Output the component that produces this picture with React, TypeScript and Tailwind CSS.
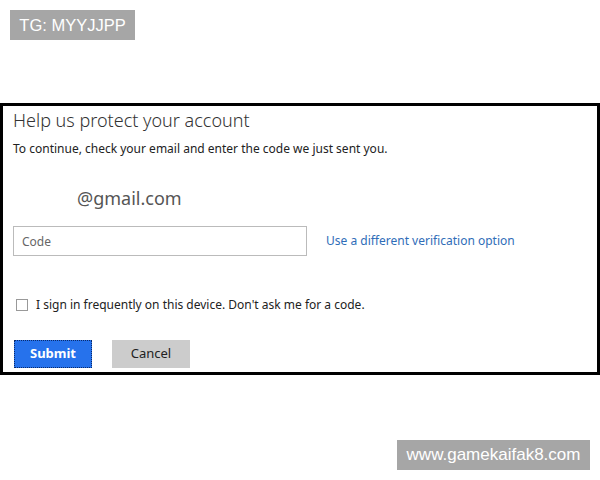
import React from 'react';

export default function App() {
  return (
    <div className="relative w-[600px] h-[480px] bg-white overflow-hidden" style={{ fontFamily: '"Noto Sans", "Open Sans", sans-serif' }}>
      <div className="absolute left-[10px] top-[10px] w-[125px] h-[30px] bg-[#a6a6a6] text-white text-[16.5px] flex items-center justify-center" style={{ fontFamily: '"Liberation Sans", Arial, sans-serif' }}>
        TG: MYYJJPP
      </div>

      <div className="pt-[103px]">
        <div className="h-[272px] border-[3px] border-black px-[10px] pt-[1px] flex flex-col">
          <h1 className="text-[18px] font-light text-[#333] leading-[26px]">Help us protect your account</h1>
          <p className="text-[12px] text-[#222] mt-[7px] leading-[18px]">To continue, check your email and enter the code we just sent you.</p>
          <div className="text-[18px] text-[#555] pl-[64px] mt-[28px] leading-[24px]">@gmail.com</div>
          <div className="flex items-center mt-[16px]">
            <input
              type="text"
              placeholder="Code"
              className="w-[294px] h-[30px] border border-[#bbb] px-[8px] text-[12px] text-[#333] placeholder:text-[#666] outline-none"
            />
            <a className="ml-[19px] text-[12px] text-[#2f6db8]">Use a different verification option</a>
          </div>
          <label className="flex items-center mt-[40px] ml-[3px] gap-[8px]">
            <span className="w-[12px] h-[12px] border border-[#999] bg-white" />
            <span className="text-[12px] text-[#222]">I sign in frequently on this device. Don't ask me for a code.</span>
          </label>
          <div className="flex items-center mt-[26px] ml-[1px] gap-[20px]">
            <button className="w-[78px] h-[28px] bg-[#2672ec] text-white font-bold text-[13px] border border-dotted border-[#0a2a6a]">Submit</button>
            <button className="w-[78px] h-[28px] bg-[#cccccc] text-[#222] text-[13px]">Cancel</button>
          </div>
        </div>
      </div>

      <div className="absolute left-[397px] top-[440px] w-[193px] h-[30px] bg-[#a6a6a6] text-white text-[17px] flex items-center justify-center" style={{ fontFamily: '"Liberation Sans", Arial, sans-serif' }}>
        www.gamekaifak8.com
      </div>
    </div>
  );
}
